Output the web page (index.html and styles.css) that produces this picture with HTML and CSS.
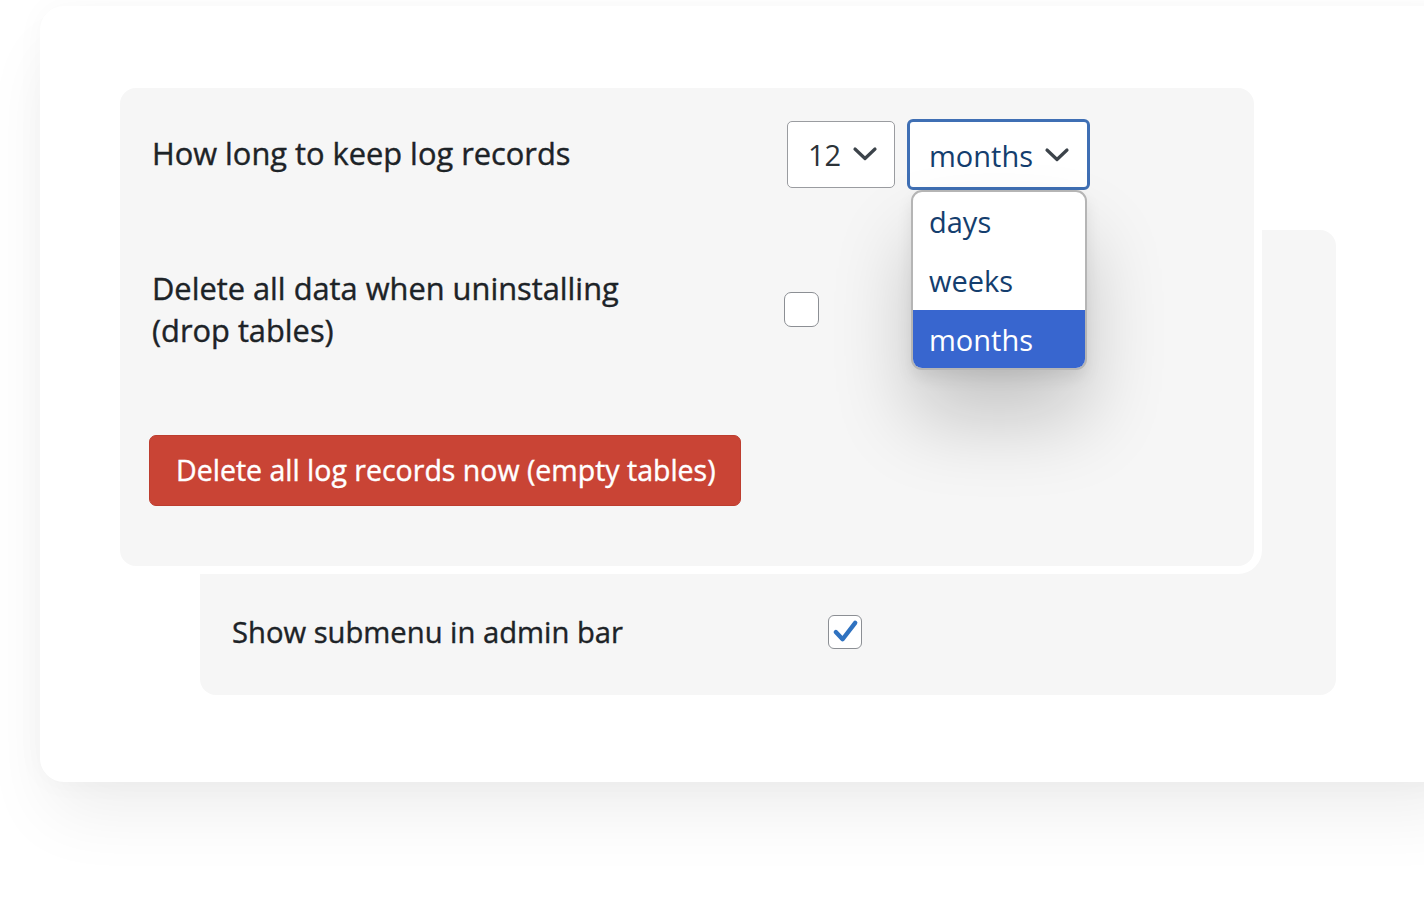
FILE: index.html
```html
<!DOCTYPE html>
<html lang="en">
<head>
<meta charset="utf-8">
<title>Settings</title>
<link rel="stylesheet" href="styles.css">
</head>
<body>
<div class="card">
  <div class="back-panel">
    <div class="row back-row">
      <div class="label back-label">Show submenu in admin bar</div>
      <div class="checkbox small checked">
        <svg viewBox="0 0 32 32" width="31" height="31"><polyline points="6,15.5 13,23 26,6" fill="none" stroke="#2f72c0" stroke-width="4.5" stroke-linecap="round" stroke-linejoin="round"/></svg>
      </div>
    </div>
  </div>

  <div class="front-panel">
    <div class="row row-keep">
      <div class="label">How long to keep log records</div>
      <div class="controls">
        <div class="select sel-num">
          <span>12</span>
          <svg class="chev" viewBox="0 0 26 16" width="26" height="16"><polyline points="3,3 13,12.5 23,3" fill="none" stroke="#3c434a" stroke-width="3.2" stroke-linecap="round" stroke-linejoin="round"/></svg>
        </div>
        <div class="select-wrap">
          <div class="select sel-unit">
            <span>months</span>
            <svg class="chev" viewBox="0 0 26 16" width="26" height="16"><polyline points="3,3 13,12.5 23,3" fill="none" stroke="#3c434a" stroke-width="3.2" stroke-linecap="round" stroke-linejoin="round"/></svg>
          </div>
          <ul class="dropdown">
            <li>days</li>
            <li>weeks</li>
            <li class="selected">months</li>
          </ul>
        </div>
      </div>
    </div>

    <div class="row row-delete">
      <div class="label">Delete all data when uninstalling<br>(drop tables)</div>
      <div class="controls">
        <div class="checkbox"></div>
      </div>
    </div>

    <button class="btn-danger" type="button">Delete all log records now (empty tables)</button>
  </div>
</div>
</body>
</html>
```

FILE: styles.css
```css
html, body {
  margin: 0;
  padding: 0;
  background: #ffffff;
}

body {
  width: 1424px;
  height: 908px;
  overflow: hidden;
  font-family: "Open Sans", "Noto Sans", "Liberation Sans", sans-serif;
  color: #1d2327;
}

.card {
  position: relative;
  margin: 6px 0 0 40px;
  width: 1440px;
  height: 776px;
  background: #ffffff;
  border-radius: 24px;
  box-shadow: 0 40px 70px -10px rgba(0, 0, 0, 0.07), 0 0 30px rgba(0, 0, 0, 0.03);
  padding-top: 224px;
  box-sizing: border-box;
}

.back-panel {
  margin-left: 160px;
  width: 1136px;
  height: 465px;
  background: #f6f6f6;
  border-radius: 16px;
  display: flex;
  flex-direction: column;
  justify-content: flex-end;
  padding: 0 32px 42px;
  box-sizing: border-box;
}

.row {
  display: flex;
  align-items: center;
}

.label {
  font-size: 30.8px;
  line-height: 42px;
  color: #1d2327;
  -webkit-text-stroke: 0.4px #1d2327;
}

.back-label {
  width: 596px;
  font-size: 29.2px;
}

.front-panel {
  position: absolute;
  left: 72px;
  top: 74px;
  box-sizing: border-box;
  width: 1150px;
  height: 494px;
  background: #f6f6f6;
  border: 8px solid #ffffff;
  border-radius: 24px;
  padding: 31px 32px 0;
  z-index: 1;
}

.front-panel .label {
  width: 632px;
  flex: none;
}

.row-keep .label {
  margin-top: -4px;
}

.controls {
  display: flex;
  align-items: center;
  gap: 12px;
}

.select {
  display: flex;
  align-items: center;
  justify-content: space-between;
  background: #ffffff;
  box-sizing: border-box;
  font-size: 29px;
}

.chev {
  display: block;
  flex: none;
}

.sel-num {
  margin-left: 3px;
  width: 108px;
  height: 67px;
  border: 1.5px solid #9a9ca0;
  border-radius: 5px;
  padding: 0 16px 2px 20px;
  color: #2c3338;
}

.select-wrap {
  position: relative;
}

.sel-unit {
  width: 183px;
  height: 71px;
  border: 3px solid #3f6fb4;
  border-radius: 6px;
  padding: 0 17px 0 19px;
  color: #143e6e;
}

.sel-unit span,
.sel-num span {
  margin-top: 2px;
}

.dropdown {
  position: absolute;
  top: 100%;
  left: 4px;
  width: 176px;
  margin: 0;
  padding: 0;
  list-style: none;
  background: #ffffff;
  border: 2px solid #b5b5b5;
  border-radius: 11px;
  overflow: hidden;
  box-sizing: border-box;
  box-shadow: 0 50px 80px rgba(0, 0, 0, 0.2), 0 8px 16px rgba(0, 0, 0, 0.08);
  z-index: 2;
}

.dropdown li {
  height: 59px;
  line-height: 59px;
  padding-left: 16px;
  font-size: 29px;
  color: #143e6e;
}

.dropdown li.selected {
  background: #3866cf;
  color: #ffffff;
  height: 58px;
}

.row-delete {
  margin-top: 77px;
}

.checkbox {
  width: 35px;
  height: 35px;
  box-sizing: border-box;
  border: 1.5px solid #8c8f94;
  border-radius: 7px;
  background: #ffffff;
  display: flex;
  align-items: center;
  justify-content: center;
}

.checkbox.small {
  width: 34px;
  height: 34px;
  border-radius: 6px;
}

.btn-danger {
  display: block;
  margin: 84px 0 0 -3px;
  width: 592px;
  height: 71px;
  background: #c94435;
  border: 1px solid #bd3d2f;
  border-radius: 7px;
  color: #ffffff;
  font-family: "Open Sans", "Noto Sans", "Liberation Sans", sans-serif;
  font-size: 28.5px;
  -webkit-text-stroke: 0.4px #ffffff;
  text-align: left;
  padding: 0 0 2px 26px;
  cursor: pointer;
}
```
